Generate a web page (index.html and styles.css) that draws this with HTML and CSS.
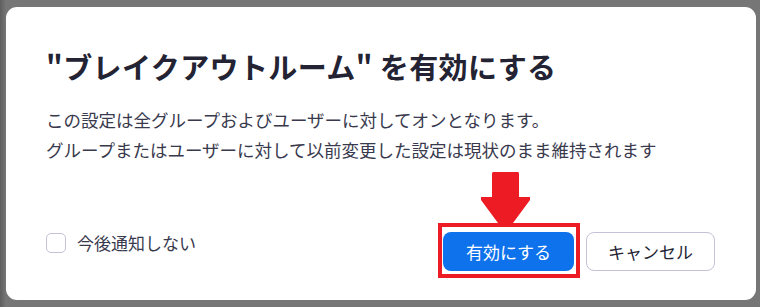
FILE: index.html
```html
<!DOCTYPE html>
<html lang="ja">
<head>
<meta charset="utf-8">
<link rel="stylesheet" href="styles.css">
</head>
<body>
<div class="overlay">
  <div class="dialog">
    <h1 class="title">"ブレイクアウトルーム" を有効にする</h1>
    <div class="body">
      <p>この設定は全グループおよびユーザーに対してオンとなります。</p>
      <p>グループまたはユーザーに対して以前変更した設定は現状のまま維持されます</p>
    </div>
    <div class="footer">
      <label class="check">
        <span class="box"></span>
        <span class="check-label">今後通知しない</span>
      </label>
      <div class="actions">
        <div class="hl">
          <button class="btn primary">有効にする</button>
          <span class="hl-rect"></span>
          <svg class="hl-arrow" width="56" height="54" viewBox="0 0 56 54">
            <polygon points="15,2 40,2 41,3 41,27 52,27 52,30 35,53 20,53 3,30 3,27 14,27 14,3" fill="#ed1c24"/>
          </svg>
        </div>
        <button class="btn secondary">キャンセル</button>
      </div>
    </div>
  </div>
</div>
</body>
</html>
```
FILE: styles.css
```css
* { box-sizing: border-box; }
html, body {
  margin: 0;
  padding: 0;
  width: 760px;
  height: 307px;
  overflow: hidden;
}
body {
  font-family: "Noto Sans CJK JP", "Noto Sans", sans-serif;
  background: #737373;
}
.overlay {
  width: 760px;
  height: 307px;
  padding: 7px 4px 7px 6px;
  background: linear-gradient(to right, #5e5e5e 0px, #767676 6px, #767676 100%);
}
.dialog {
  background: #ffffff;
  border-radius: 11px;
  height: 293px;
  padding: 39px 41px 29px 40px;
  display: flex;
  flex-direction: column;
}
.title {
  margin: 0;
  font-size: 29px;
  line-height: 40px;
  font-weight: 700;
  color: #232333;
  letter-spacing: 0.4px;
}
.body {
  margin-top: 19px;
  color: #39394d;
  font-size: 17.5px;
  line-height: 30px;
}
.body p { margin: 0; }
.footer {
  margin-top: auto;
  display: flex;
  justify-content: space-between;
  align-items: flex-start;
}
.check {
  display: flex;
  align-items: center;
  gap: 11px;
  margin-top: 1px;
}
.box {
  width: 20px;
  height: 20px;
  border: 1.5px solid #c4c2d8;
  border-radius: 5px;
  background: #fff;
}
.check-label {
  font-size: 17px;
  color: #39394d;
  line-height: 20px;
}
.actions {
  display: flex;
  gap: 12px;
}
.hl { position: relative; }
.btn {
  height: 39px;
  border-radius: 8px;
  font-family: "Noto Sans CJK JP", "Noto Sans", sans-serif;
  font-size: 17px;
  padding: 0;
  display: block;
}
.primary {
  width: 131px;
  background: #0e72ed;
  color: #ffffff;
  border: none;
}
.secondary {
  width: 129px;
  background: #ffffff;
  color: #232333;
  border: 1px solid #c4c2d8;
}
.hl-rect {
  position: absolute;
  left: -5px;
  top: -9px;
  right: -6px;
  bottom: -7px;
  border: 4px solid #ed1c24;
}
.hl-arrow {
  position: absolute;
  left: 35px;
  top: -62px;
}
```
